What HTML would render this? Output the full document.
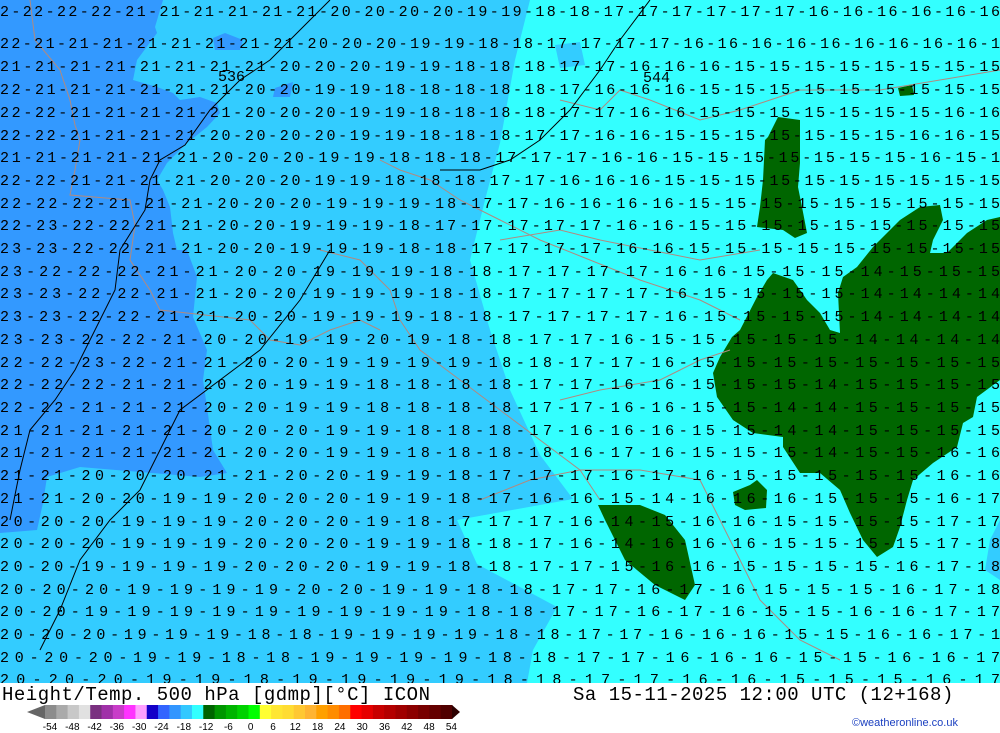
<!DOCTYPE html>
<html><head><meta charset="utf-8"><style>
html,body{margin:0;padding:0;width:1000px;height:733px;overflow:hidden;background:#fff}
#map{position:absolute;left:0;top:0}
.r{font-family:"Liberation Mono","DejaVu Sans Mono",monospace;font-size:15px;fill:#000}
#bar{position:absolute;left:0;top:683px;width:1000px;height:50px;background:#fff}
.t{position:absolute;font-family:"Liberation Mono","DejaVu Sans Mono",monospace;font-size:19px;color:#000;top:1px;white-space:pre;letter-spacing:0.5px}
.lb{position:absolute;font-family:"Liberation Sans",sans-serif;font-size:10px;top:39px;color:#000}
</style></head><body>
<svg id="map" width="1000" height="683" viewBox="0 0 1000 683">
<rect width="1000" height="683" fill="#33ffff"/>
<polygon fill="#33ccff" points="0,0 530,0 515,60 500,143 485,200 470,260 490,330 510,390 540,455 573,499 457,520 477,564 557,607 533,650 527,683 0,683"/>
<polygon fill="#3399ff" points="0,0 163,0 155,27 157,33 137,60 133,80 157,87 173,93 180,100 200,97 217,103 220,113 207,127 187,143 167,163 157,180 163,190 170,207 173,233 177,250 187,250 197,277 193,317 207,350 203,380 207,407 213,450 227,473 200,477 80,467 47,477 43,503 37,530 0,533"/>
<polygon fill="#3399ff" points="213,38 225,33 243,40 240,50 215,50"/>
<polygon fill="#3399ff" points="275,88 293,82 290,97 273,97"/>
<polygon fill="#33ccff" points="555,45 580,42 585,65 560,68"/>
<polygon fill="#33ccff" points="1000,520 990,540 985,570 1000,580"/>
<g fill="#006600">
<polygon points="778,117 800,120 800,163 798,187 802,207 807,233 795,238 783,230 757,227 760,207 763,180 765,140 768,137"/>
<polygon points="773,273 793,280 807,300 820,313 830,330 840,333 838,293 843,277 857,267 873,247 900,220 920,207 940,205 943,220 933,240 930,253 947,253 967,233 987,220 1000,217 1000,380 977,397 973,417 963,423 957,447 933,463 913,480 907,500 900,527 893,547 877,557 863,540 850,513 840,490 820,473 800,473 783,447 783,437 753,433 733,420 717,397 713,373 720,357 732,337 740,330 757,297 767,280"/>
<polygon points="733,492 750,485 757,480 767,490 766,508 745,510 735,505"/>
<polygon points="598,505 640,505 665,515 685,540 695,585 685,600 655,585 625,560 605,520"/>
<polygon points="898,88 912,85 914,95 900,96"/>
</g>
<g fill="none" stroke="#b08a80" stroke-width="1">
<polyline points="30,0 35,40 60,70 70,100 75,125 80,140 75,170 70,195 130,200 135,225 130,260 150,290 160,310 250,320 270,340 300,345 330,330 360,320 380,330"/>
<polyline points="380,160 400,170 430,180 460,200 500,220 540,240 590,260 640,280 700,300 740,320"/>
<polyline points="320,250 360,260 390,290 400,320 420,350 460,380 500,410 540,440 580,470 600,500"/>
<polyline points="480,500 530,480 580,470 640,470 700,480 720,520 740,560 760,600 800,640 840,660"/>
<polyline points="560,100 600,110 620,90 650,100 700,120 740,110 800,90 880,90 1000,70"/>
<polyline points="500,240 560,230 600,240 650,250 700,260 760,250"/>
<polyline points="560,400 600,390 660,380 700,360 730,350"/>
</g>
<g fill="none" stroke="#000" stroke-width="1">
<polyline points="330,0 300,30 270,60 240,80 210,110 185,145 160,160 150,180 145,210 120,250 115,290 95,330 75,370 55,400 30,430 20,470 10,520"/>
<polyline points="330,250 300,300 260,350 220,380 180,410 160,450 140,490 110,520 80,560 60,610 40,650"/>
<polyline points="650,0 620,40 600,70 570,110 540,140 510,160 480,170 440,170"/>
</g>
<g class="r">
<text x="0" y="16" textLength="1000" lengthAdjust="spacing">2-22-22-22-21-21-21-21-21-21-20-20-20-20-19-19-18-18-17-17-17-17-17-17-16-16-16-16-16-16</text>
<text x="0" y="48" textLength="1000" lengthAdjust="spacing">22-21-21-21-21-21-21-21-21-20-20-20-19-19-18-18-17-17-17-17-16-16-16-16-16-16-16-16-16-1</text>
<text x="0" y="71" textLength="1000" lengthAdjust="spacing">21-21-21-21-21-21-21-21-20-20-20-19-19-18-18-18-17-17-16-16-16-15-15-15-15-15-15-15-15</text>
<text x="0" y="94" textLength="1000" lengthAdjust="spacing">22-21-21-21-21-21-21-20-20-19-19-18-18-18-18-18-17-16-16-16-15-15-15-15-15-15-15-15-15</text>
<text x="0" y="117" textLength="1000" lengthAdjust="spacing">22-22-21-21-21-21-21-20-20-20-19-19-18-18-18-18-17-17-16-16-15-15-15-15-15-15-15-16-16</text>
<text x="0" y="140" textLength="1000" lengthAdjust="spacing">22-22-21-21-21-21-20-20-20-20-19-19-18-18-18-17-17-16-16-15-15-15-15-15-15-15-16-16-15</text>
<text x="0" y="162" textLength="1000" lengthAdjust="spacing">21-21-21-21-21-21-20-20-20-19-19-18-18-18-17-17-17-16-16-15-15-15-15-15-15-15-16-15-1</text>
<text x="0" y="185" textLength="1000" lengthAdjust="spacing">22-22-21-21-21-21-20-20-20-19-19-18-18-18-17-17-16-16-16-15-15-15-15-15-15-15-15-15-15</text>
<text x="0" y="208" textLength="1000" lengthAdjust="spacing">22-22-22-21-21-21-20-20-20-19-19-19-18-17-17-16-16-16-16-15-15-15-15-15-15-15-15-15</text>
<text x="0" y="230" textLength="1000" lengthAdjust="spacing">22-23-22-22-21-21-20-20-19-19-19-18-17-17-17-17-17-16-16-15-15-15-15-15-15-15-15-15</text>
<text x="0" y="253" textLength="1000" lengthAdjust="spacing">23-23-22-22-21-21-20-20-19-19-19-18-18-17-17-17-17-16-16-15-15-15-15-15-15-15-15-15</text>
<text x="0" y="276" textLength="1000" lengthAdjust="spacing">23-22-22-22-21-21-20-20-19-19-19-18-18-17-17-17-17-16-16-15-15-15-14-15-15-15</text>
<text x="0" y="298" textLength="1000" lengthAdjust="spacing">23-23-22-22-21-21-20-20-19-19-19-18-18-17-17-17-17-16-15-15-15-15-14-14-14-14</text>
<text x="0" y="321" textLength="1000" lengthAdjust="spacing">23-23-22-22-21-21-20-20-19-19-19-18-18-17-17-17-17-16-15-15-15-15-14-14-14-14</text>
<text x="0" y="344" textLength="1000" lengthAdjust="spacing">23-23-22-22-21-20-20-19-19-20-19-18-18-17-17-16-15-15-15-15-15-14-14-14-14</text>
<text x="0" y="367" textLength="1000" lengthAdjust="spacing">22-22-23-22-21-21-20-20-19-19-19-19-18-18-17-17-16-15-15-15-15-15-15-15-15</text>
<text x="0" y="389" textLength="1000" lengthAdjust="spacing">22-22-22-21-21-20-20-19-19-18-18-18-18-17-17-16-16-15-15-15-14-15-15-15-15</text>
<text x="0" y="412" textLength="1000" lengthAdjust="spacing">22-22-21-21-21-20-20-19-19-18-18-18-18-17-17-16-16-15-15-14-14-15-15-15-15</text>
<text x="0" y="435" textLength="1000" lengthAdjust="spacing">21-21-21-21-21-20-20-20-19-19-18-18-18-17-16-16-16-15-15-14-14-15-15-15-15</text>
<text x="0" y="457" textLength="1000" lengthAdjust="spacing">21-21-21-21-21-21-20-20-19-19-18-18-18-18-16-17-16-15-15-15-14-15-15-16-16</text>
<text x="0" y="480" textLength="1000" lengthAdjust="spacing">21-21-20-20-20-21-21-20-20-19-19-18-17-17-17-16-17-16-15-15-15-15-15-16-16</text>
<text x="0" y="503" textLength="1000" lengthAdjust="spacing">21-21-20-20-19-19-20-20-20-19-19-18-17-16-16-15-14-16-16-16-15-15-15-16-17</text>
<text x="0" y="526" textLength="1000" lengthAdjust="spacing">20-20-20-19-19-19-20-20-20-19-18-17-17-17-16-14-15-16-16-15-15-15-15-17-17</text>
<text x="0" y="548" textLength="1000" lengthAdjust="spacing">20-20-20-19-19-19-20-20-20-19-19-18-18-17-16-14-16-16-16-15-15-15-15-17-18</text>
<text x="0" y="571" textLength="1000" lengthAdjust="spacing">20-20-19-19-19-19-20-20-20-19-19-18-18-17-17-15-16-16-15-15-15-15-16-17-18</text>
<text x="0" y="594" textLength="1000" lengthAdjust="spacing">20-20-20-19-19-19-19-20-20-19-19-18-18-17-17-16-17-16-15-15-15-16-17-18</text>
<text x="0" y="616" textLength="1000" lengthAdjust="spacing">20-20-19-19-19-19-19-19-19-19-19-18-18-17-17-16-17-16-15-15-16-16-17-17</text>
<text x="0" y="639" textLength="1000" lengthAdjust="spacing">20-20-20-19-19-19-18-18-19-19-19-19-18-18-17-17-16-16-16-15-15-16-16-17-1</text>
<text x="0" y="662" textLength="1000" lengthAdjust="spacing">20-20-20-19-19-18-18-19-19-19-19-18-18-17-17-16-16-16-15-15-16-16-17</text>
<text x="0" y="684" textLength="1000" lengthAdjust="spacing">20-20-20-19-19-18-19-19-19-19-18-18-17-17-16-16-15-15-15-16-17</text>
</g>
<text x="218" y="81" style="font-family:'Liberation Mono',monospace;font-size:15px">536</text>
<text x="643" y="82" style="font-family:'Liberation Mono',monospace;font-size:15px">544</text>
</svg>
<div id="bar">
<div class="t" style="left:2px">Height/Temp. 500 hPa [gdmp][°C] ICON</div>
<div class="t" style="left:573px">Sa 15-11-2025 12:00 UTC (12+168)</div>
<svg style="position:absolute;left:0;top:22px" width="470" height="16">
<polygon points="27,7 45,0 45,14" fill="#666"/>
<g id="cells"></g>
<polygon points="452,0 460,7 452,14" fill="#2d0000"/>
</svg>
<div style="position:absolute;left:852px;top:34px;font-family:'Liberation Sans',sans-serif;font-size:11px;color:#1a3fc0">©weatheronline.co.uk</div>
<div id="labels"></div>
</div>
<script>
var cols=["#8c8c8c","#aaaaaa","#c8c8c8","#e1e1e1","#7a3080","#a030a8","#c83cc8","#ff32ff","#ffa0ff","#1400c8","#3264ff","#3296ff","#32c8ff","#32ffff","#006400","#009600","#00b400","#00d200","#00ff00","#ffff32","#ffe632","#ffdc32","#ffc832","#ffb432","#ffa000","#ff8c00","#ff6e00","#ff0000","#e60000","#c80000","#b40000","#a00000","#8c0000","#780000","#640000","#500000"];
var g=document.getElementById("cells"),w=(452-45)/36,s="";
for(var i=0;i<36;i++){s+='<rect x="'+(45+i*w)+'" y="0" width="'+(w+0.5)+'" height="14" fill="'+cols[i]+'"/>';}
g.innerHTML=s;
var L=document.getElementById("labels"),h="";
for(var j=0;j<19;j++){var v=-54+6*j;var c=50+22.3*j;h+='<div class="lb" style="left:'+(c-12)+'px;width:24px;text-align:center">'+v+'</div>';}
L.innerHTML=h;
</script>
</body></html>
